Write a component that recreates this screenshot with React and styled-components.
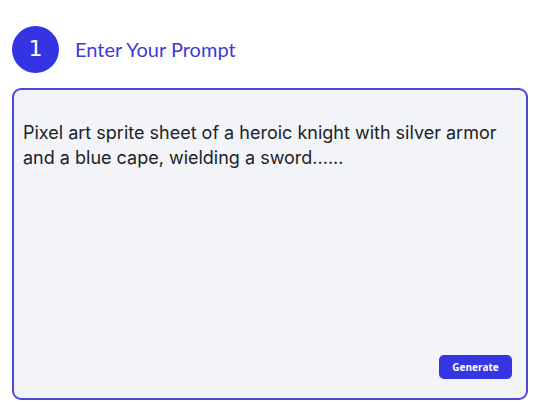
import React from "react";
import styled, { createGlobalStyle } from "styled-components";

const Global = createGlobalStyle`
  html, body { margin: 0; padding: 0; background: #ffffff; }
  body { width: 540px; height: 405px; overflow: hidden; }
`;

const Page = styled.div`
  box-sizing: border-box;
  width: 540px;
  height: 405px;
  padding: 25px 12px 5px 12px;
  display: flex;
  flex-direction: column;
  gap: 15px;
`;

const Header = styled.div`
  display: flex;
  align-items: center;
  gap: 16px;
  height: 48px;
`;

const StepBadge = styled.div`
  width: 47px;
  height: 47px;
  border-radius: 50%;
  background: #3434e2;
  color: #ffffff;
  display: flex;
  align-items: center;
  justify-content: center;
  font-family: "DejaVu Sans", "Noto Sans", sans-serif;
  font-weight: 400;
  font-size: 22px;
  padding-bottom: 1px;
  box-sizing: border-box;
`;

const Title = styled.h2`
  margin: 0;
  font-family: "Lato", "Noto Sans", sans-serif;
  font-weight: 400;
  font-size: 20px;
  color: #3d3ad6;
`;

const PromptBox = styled.div`
  box-sizing: border-box;
  flex: 1;
  width: 516px;
  border: 2px solid #4d47d6;
  border-radius: 9px;
  background: #f3f4f8;
  padding: 30px 9px 19px 9px;
  display: flex;
  flex-direction: column;
  justify-content: space-between;
`;

const PromptText = styled.p`
  margin: 0;
  font-family: "Inter", "Noto Sans", sans-serif;
  font-size: 18px;
  line-height: 25px;
  color: #222226;
`;

const Actions = styled.div`
  display: flex;
  justify-content: flex-end;
  padding-right: 5px;
`;

const GenerateButton = styled.button`
  width: 73px;
  height: 24px;
  border: none;
  border-radius: 5px;
  background: #3535e2;
  color: #ffffff;
  font-family: "Open Sans", "Noto Sans", sans-serif;
  font-weight: 700;
  font-size: 10px;
  cursor: pointer;
`;

export default function App() {
  return (
    <>
      <Global />
      <Page>
        <Header>
          <StepBadge>1</StepBadge>
          <Title>Enter Your Prompt</Title>
        </Header>
        <PromptBox>
          <PromptText>
            Pixel art sprite sheet of a heroic knight with silver armor and a blue cape, wielding a sword......
          </PromptText>
          <Actions>
            <GenerateButton>Generate</GenerateButton>
          </Actions>
        </PromptBox>
      </Page>
    </>
  );
}
